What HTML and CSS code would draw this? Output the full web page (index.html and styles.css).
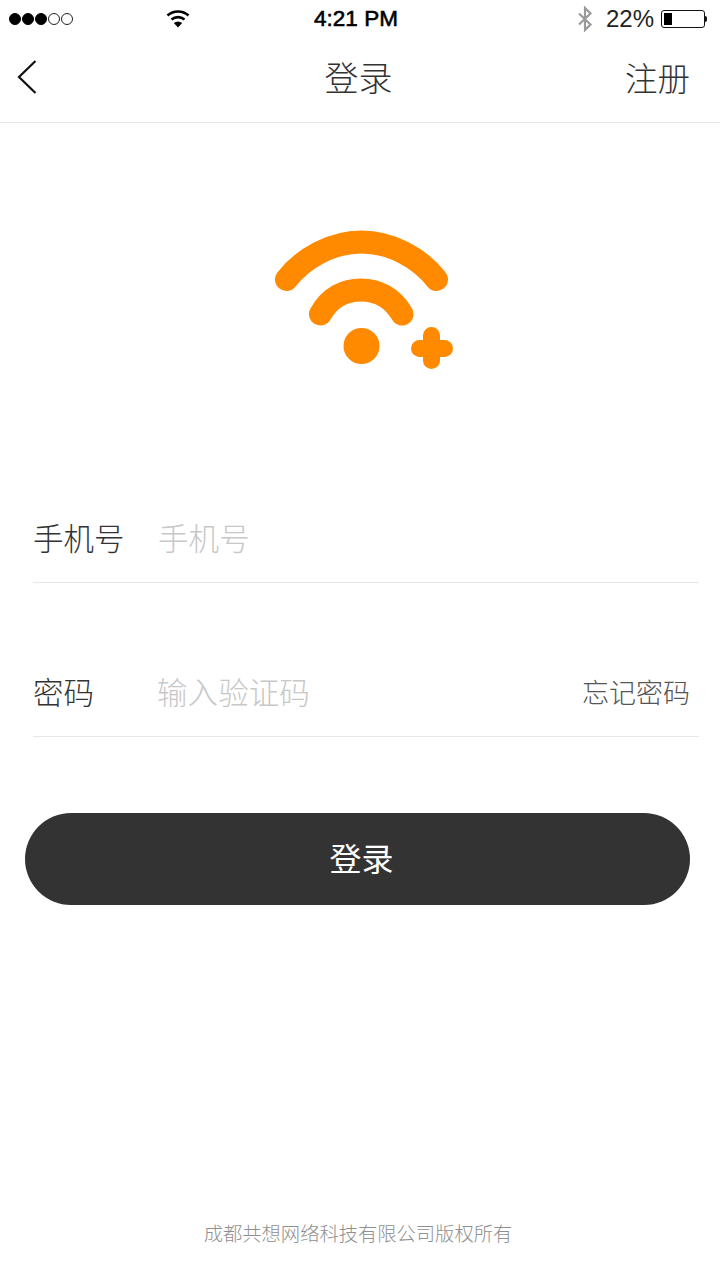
FILE: index.html
```html
<!DOCTYPE html>
<html lang="zh-CN">
<head>
<meta charset="utf-8">
<title>登录</title>
<link rel="stylesheet" href="styles.css">
</head>
<body>
<div class="page">
  <div class="status">
    <div class="status-left">
      <div class="signal">
        <span class="dot on"></span><span class="dot on"></span><span class="dot on"></span><span class="dot"></span><span class="dot"></span>
      </div>
      <svg class="wifi" width="24" height="20" viewBox="0 0 24 20">
        <path d="M1.5 6.5C7.5 1.2 16.5 1.2 22.500 6.500" fill="none" stroke="#000" stroke-width="2.600"/>
        <path d="M5.500 10.500C9.300 7.300 14.700 7.300 18.500 10.500" fill="none" stroke="#000" stroke-width="2.600"/>
        <path d="M7.800 14C10.500 12 13.500 12 16.200 14L12 18.500Z" fill="#000"/>
      </svg>
    </div>
    <div class="time">4:21 PM</div>
    <div class="status-right">
      <svg class="bt" width="16" height="26" viewBox="0 0 16 26">
        <path d="M2 7.500L13.500 18.500L8 24V2L13.500 7.500L2 18.500" fill="none" stroke="#9a9a9a" stroke-width="2.200"/>
      </svg>
      <span class="pct">22%</span>
      <div class="battery"><div class="level"></div></div>
      <div class="nub"></div>
    </div>
  </div>
  <header class="nav">
    <svg class="back" width="20" height="36" viewBox="0 0 20 36">
      <path d="M18.500 2L2 18L18.500 34" fill="none" stroke="#111" stroke-width="2.200"/>
    </svg>
    <h1 class="nav-title">登录</h1>
    <a class="nav-action">注册</a>
  </header>
  <main class="main">
    <svg class="logo" width="190" height="150" viewBox="270 225 190 150">
      <path d="M286.500 279.500C303 258 332 242 361.500 242C391 242 420 258 436.500 279.500" class="arc"/>
      <path d="M320.500 314C330 297 345 290 361 290C377 290 392 297 402 314" class="arc"/>
      <circle cx="361.500" cy="346" r="18" fill="#ff8a00"/>
      <path d="M419.500 348.500H444.500M431.500 335.500V360.500" class="plus"/>
    </svg>
    <form class="form">
      <div class="row first">
        <label class="label">手机号</label>
        <span class="placeholder">手机号</span>
      </div>
      <div class="row second">
        <label class="label">密码</label>
        <span class="placeholder">输入验证码</span>
        <a class="forgot">忘记密码</a>
      </div>
    </form>
    <button class="submit" type="button">登录</button>
  </main>
  <footer class="footer">成都共想网络科技有限公司版权所有</footer>
</div>
</body>
</html>
```

FILE: styles.css
```css
* { box-sizing: border-box; }
html, body { margin: 0; padding: 0; background: #fff; }
body { font-family: "Noto Sans CJK SC", "Liberation Sans", sans-serif; color: #333; }
.page { width: 720px; height: 1280px; display: flex; flex-direction: column; overflow: hidden; }

.status { height: 38px; display: grid; grid-template-columns: 1fr auto 1fr; align-items: center; font-family: "Liberation Sans", sans-serif; color: #000; }
.status-left { display: flex; align-items: center; padding-left: 9px; }
.signal { display: flex; gap: 1px; width: 157px; }
.dot { width: 12px; height: 12px; border-radius: 50%; border: 1px solid #222; }
.dot.on { background: #000; border-color: #000; }
.wifi { display: block; margin-top: -1px; }
.time { font-size: 22.500px; font-weight: 400; -webkit-text-stroke: 0.6px #000; margin-right: 8px; }
.status-right { display: flex; align-items: center; justify-content: flex-end; padding-right: 13px; }
.bt { display: block; margin-right: 13px; }
.pct { font-size: 24px; margin-right: 7px; color: #222; }
.battery { width: 44px; height: 18px; border: 1px solid #111; border-radius: 3px; padding: 2px; }
.level { width: 8px; height: 100%; background: #000; }
.nub { width: 2px; height: 6px; background: #111; border-radius: 0 2px 2px 0; }

.nav { height: 85px; border-bottom: 1px solid #e6e6e6; display: grid; grid-template-columns: 1fr auto 1fr; align-items: center; padding: 0 30px 6px 17px; }
.back { display: block; }
.nav-title { margin: 0 0 0 10px; font-size: 34px; font-weight: 300; color: #333; line-height: 1; }
.nav-action { justify-self: end; font-size: 32.500px; font-weight: 300; color: #333; line-height: 1; }

.main { display: flex; flex-direction: column; flex: 1; }
.logo { display: block; margin: 102px 0 0 270px; }
.arc { fill: none; stroke: #ff8a00; stroke-width: 23; stroke-linecap: round; }
.plus { fill: none; stroke: #ff8a00; stroke-width: 17; stroke-linecap: round; }

.form { margin: 128px 21px 0 33px; display: flex; flex-direction: column; gap: 74px; }
.row { height: 80px; border-bottom: 1px solid #e8e8e8; display: flex; align-items: center; padding-bottom: 11px; }
.label { width: 125px; font-size: 30.500px; font-weight: 300; color: #333; line-height: 1; }
.row.second .label { width: 124px; }
.placeholder { font-size: 30.600px; font-weight: 300; color: #c8c8c8; line-height: 1; }
.forgot { margin-left: auto; margin-right: 9px; font-size: 27px; font-weight: 300; color: #555; line-height: 1; }

.submit { margin: 76px 0 0 25px; width: 665px; height: 92px; border: 0; border-radius: 46px; background: #333; color: #fff; font-family: inherit; font-size: 32px; font-weight: 400; padding: 0 0 4px 8px; }

.footer { height: 92px; padding: 0 4px 37px 0; text-align: center; font-size: 19.300px; font-weight: 300; color: #8f8f8f; line-height: 1; display: flex; align-items: flex-end; justify-content: center; }
```
